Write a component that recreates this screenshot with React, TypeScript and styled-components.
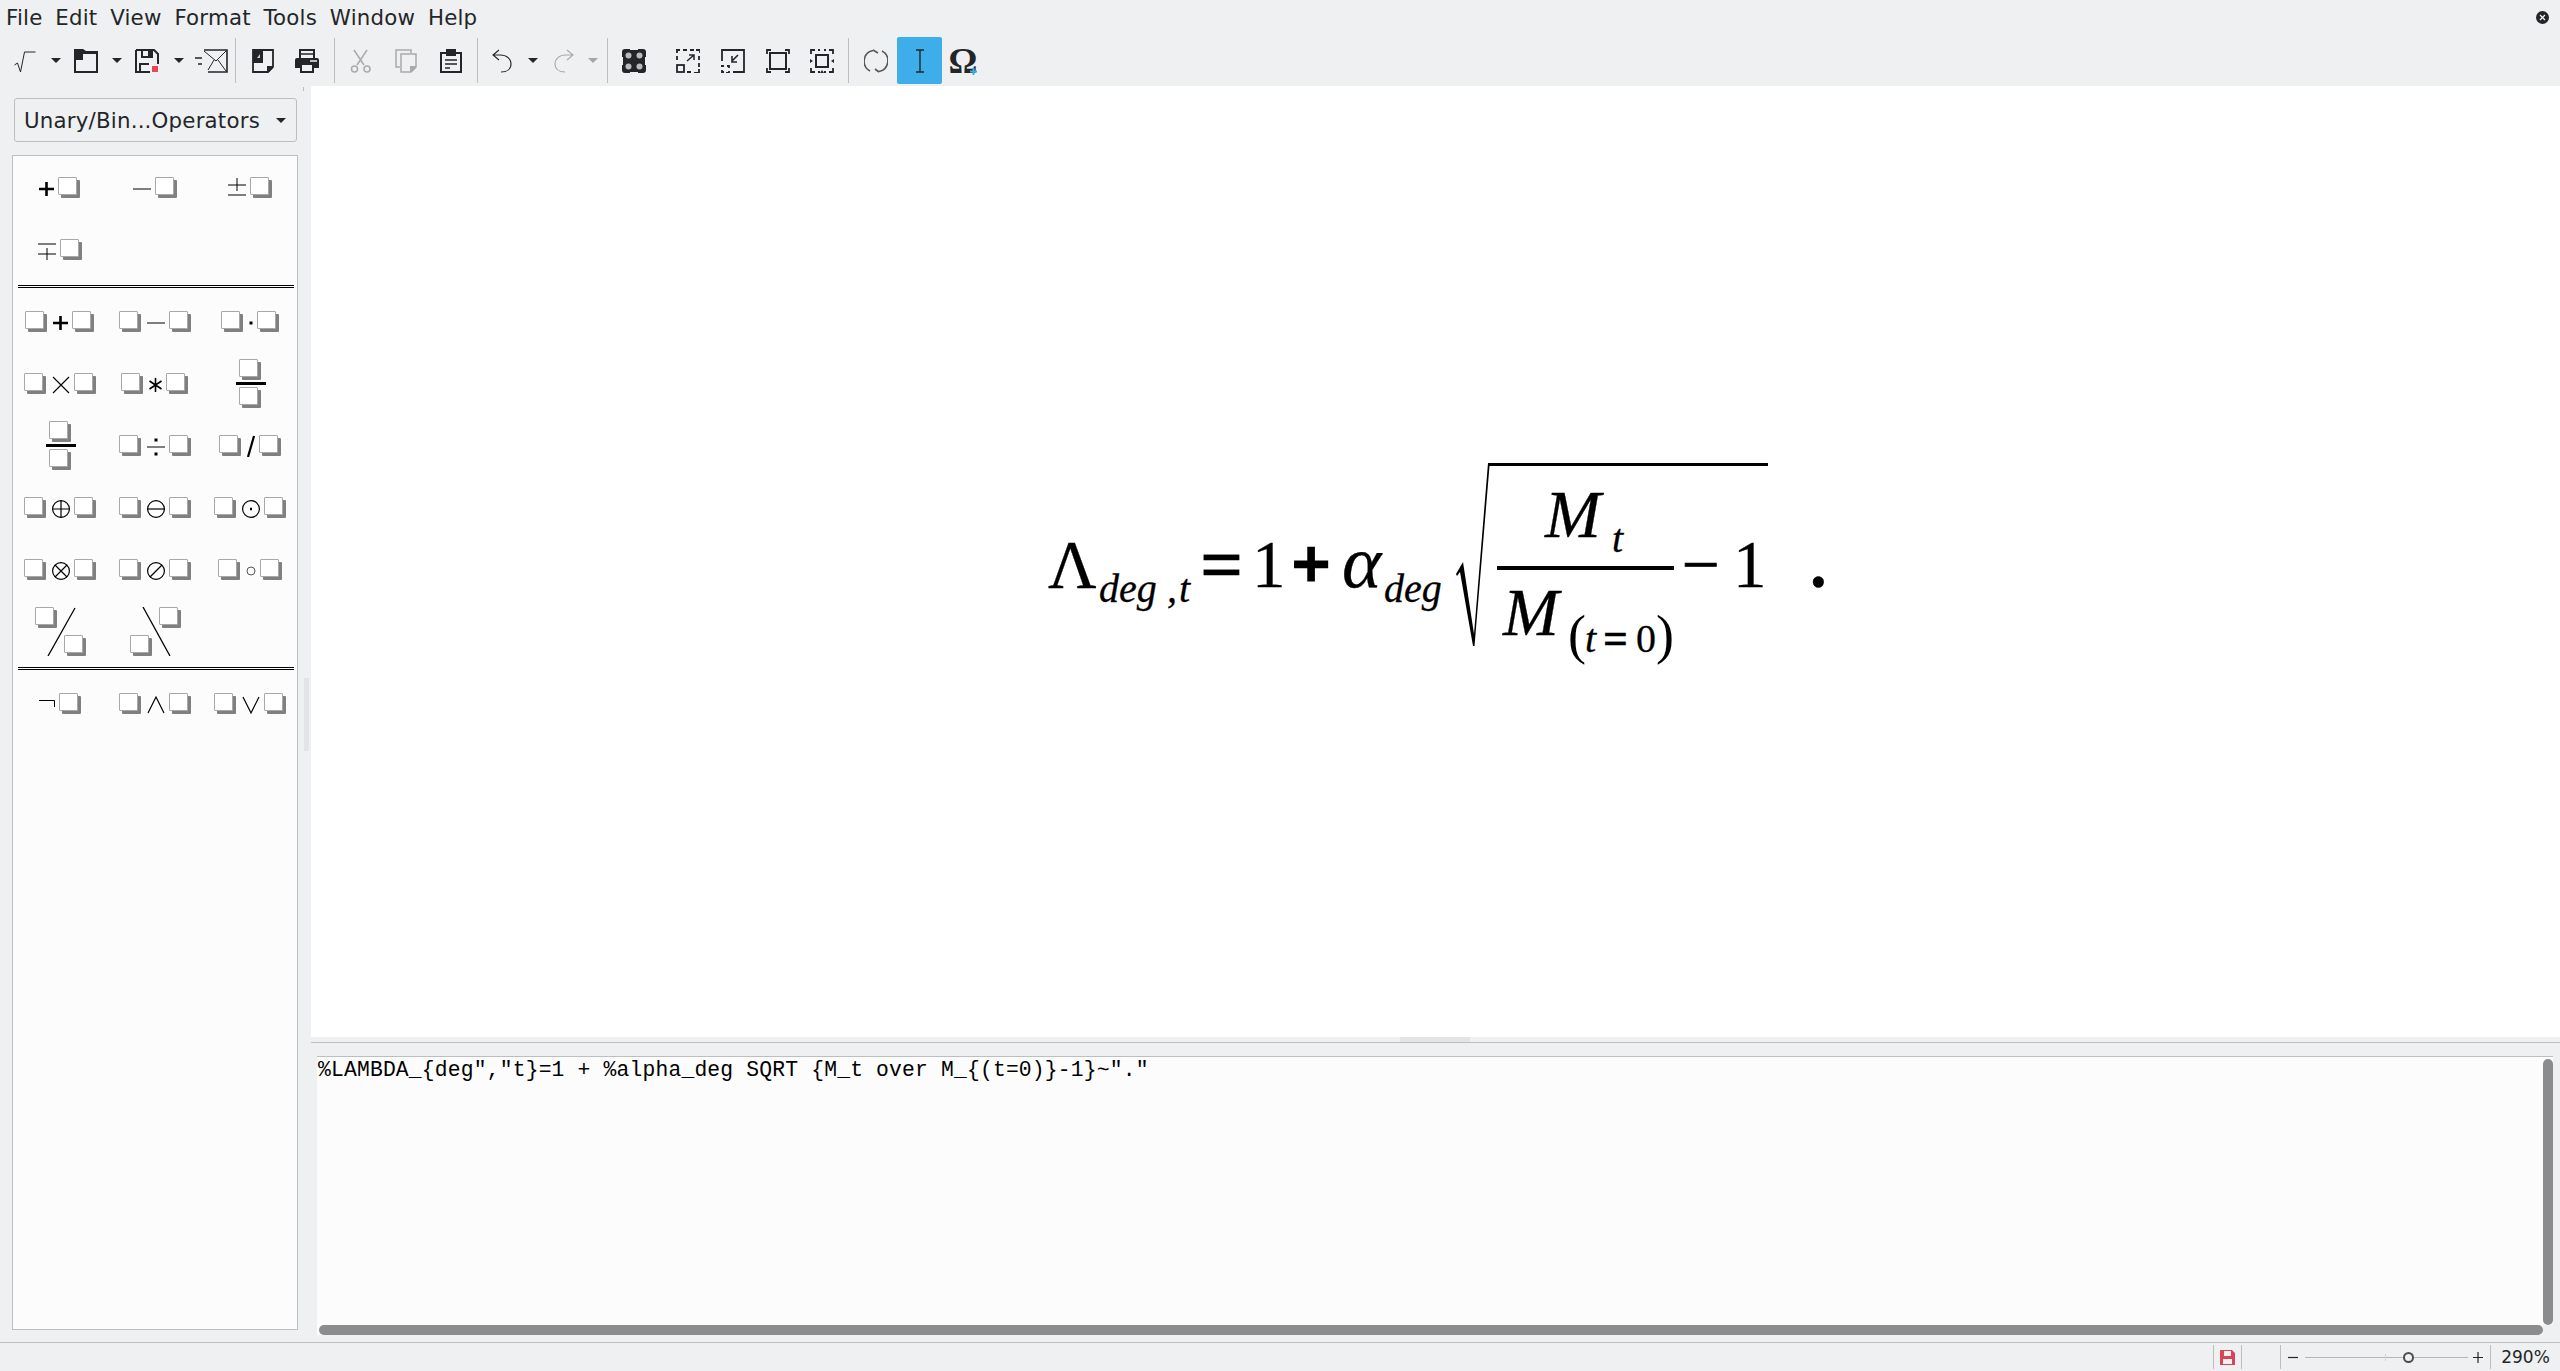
// Math formula editor window: menu, toolbar, elements panel, formula canvas, command pane
import React from 'react';
import styled, { createGlobalStyle } from 'styled-components';

const GlobalStyle = createGlobalStyle`
  html, body { margin: 0; padding: 0; height: 100%; overflow: hidden; }
  #root { height: 100%; }
`;

const Window = styled.div`
  width: 2560px;
  height: 1371px;
  display: flex;
  flex-direction: column;
  background: #eff0f1;
  color: #232629;
  font-family: "DejaVu Sans", sans-serif;
  font-size: 21.33px;
`;

const MenuBar = styled.div`
  height: 37px;
  flex: none;
  box-sizing: border-box;
  display: flex;
  align-items: center;
  padding: 0 11px 2px 0;
`;

const MenuItem = styled.div`
  padding: 0 6.4px;
  line-height: 26px;
  letter-spacing: 0.2px;

  &:first-child {
    padding-left: 6px;
  }
`;

const CloseDoc = styled.div`
  margin-left: auto;
  width: 13px;
  height: 13px;
  border-radius: 50%;
  background: #232629;
  display: flex;
  align-items: center;
  justify-content: center;
`;

const Toolbar = styled.div`
  height: 49px;
  flex: none;
  display: flex;
  align-items: flex-start;
  padding-left: 3px;
`;

const ToolSlot = styled.div<{ $w: number; $active?: boolean }>`
  width: ${p => p.$w}px;
  height: 47px;
  flex: none;
  display: flex;
  align-items: center;
  justify-content: center;
  border-radius: 2px;
  background: ${p => (p.$active ? '#3daee9' : 'transparent')};
`;

const ToolSep = styled.div`
  width: 1px;
  height: 45px;
  margin: 1px 5px 0;
  flex: none;
  background: #bcbebf;
`;

const OmegaGlyph = styled.span`
  font-family: "Liberation Serif", serif;
  font-weight: 700;
  font-size: 36px;
  line-height: 30px;
  color: #232629;
`;

const OmegaWrap = styled.div`
  position: relative;
  width: 26px;
  height: 30px;
  display: flex;
  align-items: center;
  justify-content: center;

  svg {
    position: absolute;
    right: -2px;
    bottom: 0;
  }
`;

const Main = styled.div`
  flex: 1;
  display: flex;
  min-height: 0;
`;

const Sidebar = styled.div`
  width: 311px;
  flex: none;
  position: relative;
  box-sizing: border-box;
  padding: 12px 13px 12px 12px;
  display: flex;
  flex-direction: column;

  &::before {
    content: '';
    position: absolute;
    right: 7px;
    top: 1px;
    width: 1px;
    height: 4px;
    background: #bcbebf;
  }
`;

const SideHandle = styled.div`
  position: absolute;
  right: 2px;
  top: 592px;
  width: 5px;
  height: 73px;
  background: #e3e4e5;
`;

const Dropdown = styled.div`
  height: 44px;
  margin: 0 1px 13px 2px;
  flex: none;
  box-sizing: border-box;
  border: 1px solid #bcbebf;
  border-radius: 3px;
  display: flex;
  align-items: center;
  justify-content: space-between;
  padding: 0 10px 0 9px;
  letter-spacing: 0.2px;
`;

const Caret = styled.div<{ $muted?: boolean }>`
  width: 0;
  height: 0;
  border-left: 5px solid transparent;
  border-right: 5px solid transparent;
  border-top: 5px solid ${p => (p.$muted ? '#a5a6a7' : '#232629')};
`;

const ElementBox = styled.div`
  flex: 1;
  box-sizing: border-box;
  border: 1px solid #bcbebf;
  background: #fcfcfc;
`;

const ElementGrid = styled.div`
  display: grid;
  grid-template-columns: repeat(3, 95px);
  grid-auto-rows: 62px;
`;

const ElementCell = styled.div`
  display: flex;
  align-items: center;
  justify-content: center;
  gap: 4px;
`;

const Placeholder = styled.div`
  width: 17px;
  height: 16px;
  flex: none;
  margin: 0 5px 3px 0;
  border: 1px solid #a8a8a8;
  border-radius: 1px;
  background: #fff;
  box-shadow: 3px 3px 0 #808080;
`;

const FracCell = styled.div`
  display: flex;
  flex-direction: column;
  align-items: center;
  gap: 2px;
`;

const FracPlaceholder = styled(Placeholder)`
  margin: 0 0 3px 0;
  position: relative;
  left: -2px;
`;

const FracBar = styled.div`
  width: 30px;
  height: 3px;
  background: #000;
`;

const WideGrid = styled.div`
  position: relative;
  display: grid;
  grid-template-columns: 22px 22px;
  grid-template-rows: 21px 21px;
  gap: 7px;

  svg {
    position: absolute;
    left: 0;
    top: 0;
  }
`;

const GroupRule = styled.div<{ $top: number; $bottom: number }>`
  padding: ${p => p.$top}px 3px ${p => p.$bottom}px 5px;
`;

const RuleLine = styled.div`
  height: 1px;
  border-top: 1px solid #000;
  border-bottom: 1px solid #000;
  background: #fff;
`;

const WorkColumn = styled.div`
  flex: 1;
  min-width: 0;
  display: flex;
  flex-direction: column;
`;

const Canvas = styled.div`
  height: 951px;
  flex: none;
  background: #fff;
  display: flex;
  align-items: center;
  justify-content: center;
`;

const Splitter = styled.div`
  height: 19px;
  flex: none;
  box-sizing: border-box;
  padding-top: 5px;
  position: relative;
`;

const SplitLine = styled.div`
  height: 1px;
  background: #bcbebf;
`;

const SplitGrip = styled.div`
  position: absolute;
  left: 1089px;
  top: 0;
  width: 70px;
  height: 5px;
  background: #e3e4e5;
`;

const EditorPane = styled.div`
  flex: 1;
  margin: 0 7px 7px 6px;
  display: grid;
  grid-template-columns: 1fr 10px;
  grid-template-rows: 1fr 10px;
  min-height: 0;
`;

const EditorText = styled.div`
  background: #fcfcfc;
  border-top: 1px solid #bcbebf;
  padding: 1px 1px 0;
  font-family: "Liberation Mono", monospace;
  font-size: 21.33px;
  letter-spacing: 0.18px;
  line-height: 24px;
  white-space: pre;
  color: #000;
`;

const VTrack = styled.div`
  background: #fcfcfc;
  border-top: 1px solid #bcbebf;
  padding: 2px 0 0;
`;

const VThumb = styled.div`
  height: 100%;
  box-sizing: border-box;
  background: #8b8c8d;
  border-radius: 5px;
`;

const HTrack = styled.div`
  background: #fcfcfc;
  padding-left: 2px;
`;

const HThumb = styled.div`
  height: 100%;
  background: #8b8c8d;
  border-radius: 5px;
`;

const StatusBar = styled.div`
  height: 29px;
  flex: none;
  box-sizing: border-box;
  border-top: 1px solid #bcbebf;
  display: flex;
  align-items: center;
  justify-content: flex-end;
`;

const StatusCell = styled.div<{ $w: number }>`
  width: ${p => p.$w}px;
  height: 24px;
  box-sizing: border-box;
  border-left: 1px solid #bcbebf;
  display: flex;
  align-items: center;
  justify-content: center;
  flex: none;
`;

const ZoomSlider = styled.div`
  width: 163px;
  height: 1px;
  background: #b4b5b6;
  position: relative;
  margin: 0 5px 0 7px;
`;

const ZoomTick = styled.div`
  position: absolute;
  left: 80px;
  top: -3px;
  width: 1px;
  height: 7px;
  background: #d4d5d6;
`;

const ZoomThumb = styled.div`
  position: absolute;
  left: 98px;
  top: -5px;
  width: 11px;
  height: 11px;
  box-sizing: border-box;
  border: 2px solid #4d4d4d;
  border-radius: 50%;
  background: #eff0f1;
`;

const ZoomSign = styled.div`
  width: 10px;
  height: 11px;
  flex: none;

  svg {
    display: block;
  }
`;

const ZoomValue = styled.div`
  font-size: 17px;
  line-height: 22px;
`;

const INK = '#232629';
const GREY = '#a9aaab';

type IconProps = { w?: number; h?: number; children: React.ReactNode };

const Ic = ({ w = 24, h = 24, children }: IconProps) => (
  <svg width={w} height={h} viewBox={`0 0 ${w} ${h}`} fill="none">
    {children}
  </svg>
);

const RootIcon = () => (
  <Ic w={22} h={24}>
    <path d="M0.5 16 L3.5 14 L6.5 23 L10.5 3 H21.5" stroke={INK} strokeWidth="1" />
  </Ic>
);

const FolderIcon = () => (
  <Ic>
    <path fillRule="evenodd" fill={INK} d="M0 0H9L12 2H24V24H0ZM9 5V11H2V22H22V5Z" />
  </Ic>
);

const SaveIcon = () => (
  <Ic>
    <path d="M1 1H19L23 5V15M15 23H1V1" stroke={INK} strokeWidth="2" />
    <path d="M7 1V8H17V1" stroke={INK} strokeWidth="2" />
    <path fill={INK} d="M13 2H16V7H13Z" />
    <path d="M5 23V15H14" stroke={INK} strokeWidth="2" />
    <rect x="17" y="17" width="6" height="6" fill="#e8475a" />
  </Ic>
);

const MailIcon = () => (
  <Ic w={34}>
    <path d="M10 1H33V23H14" stroke={INK} strokeWidth="1.6" />
    <path d="M10 2L22 12L32 2M14 21L20 11M32 22L24 11" stroke={INK} strokeWidth="1" />
    <path d="M1 9H8M4 15H8" stroke={INK} strokeWidth="1.6" />
  </Ic>
);

const ImportIcon = () => (
  <Ic w={22}>
    <path d="M1 1H21V18L16 23H1Z" stroke={INK} strokeWidth="1.8" />
    <path fill={INK} d="M1 1H11V14H1Z M21 17V19L17 23H15V17Z" />
    <path fill="#c9cacb" d="M5 9L8 5V9Z" />
  </Ic>
);

const PrintIcon = () => (
  <Ic>
    <path d="M5 9V1H19V9" stroke={INK} strokeWidth="2" />
    <path fill={INK} d="M2 9H22Q24 9 24 11V19H19V16H5V19H0V11Q0 9 2 9Z" />
    <path d="M6 5H18" stroke={INK} strokeWidth="1.5" />
    <path d="M15 12H22" stroke="#eff0f1" strokeWidth="1.5" />
    <path d="M6 16V23H18V16" stroke={INK} strokeWidth="2" />
  </Ic>
);

const CutIcon = () => (
  <Ic w={22}>
    <path d="M4 1L14 16M17 1L7 16" stroke={GREY} strokeWidth="1.5" />
    <circle cx="4.5" cy="20" r="3" stroke={GREY} strokeWidth="1.5" />
    <circle cx="17" cy="20" r="3" stroke={GREY} strokeWidth="1.5" />
  </Ic>
);

const CopyIcon = () => (
  <Ic w={22}>
    <path d="M5 18H1V1H16V4" stroke={GREY} strokeWidth="1.5" />
    <path d="M6 5H21V18L16 23H6Z" stroke={GREY} strokeWidth="1.5" />
    <path fill={GREY} d="M21 17V19L17 23H15V17Z" />
  </Ic>
);

const PasteIcon = () => (
  <Ic w={22}>
    <path d="M6 4H1V23H21V4H16" stroke={INK} strokeWidth="2" />
    <path fill={INK} d="M6 0H16V7H6Z" />
    <path d="M5 11H17M5 15H17M5 19H10" stroke={INK} strokeWidth="1.6" />
  </Ic>
);

const UndoIcon = ({ color = INK, flip = false }: { color?: string; flip?: boolean }) => (
  <svg width="20" height="24" viewBox="0 0 20 24" fill="none" style={flip ? { transform: 'scaleX(-1)' } : undefined}>
    <path d="M7 1L1 6L7 11M1 6H8C15 6 19 10 19 15C19 20 15 23 9 23" stroke={color} strokeWidth="1.1" />
  </svg>
);

const ZoomGridIcon = () => (
  <Ic>
    <rect width="24" height="24" rx="3" fill={INK} />
    <circle cx="6.5" cy="6.5" r="3" fill="#b9babb" />
    <circle cx="17.5" cy="6.5" r="3" fill="#b9babb" />
    <circle cx="6.5" cy="17.5" r="3" fill="#b9babb" />
    <circle cx="17.5" cy="17.5" r="3" fill="#b9babb" />
    <path d="M8 0.5H16M8 23.5H16M0.5 8V16M23.5 8V16" stroke="#eff0f1" strokeWidth="1" />
  </Ic>
);

const ZoomInIcon = () => (
  <Ic>
    <path d="M0 1H4M7 1H11M14 1H18M20 1H24V4M23 7V11M23 14V18M23 20V24H18M15 23H11M1 0V4M1 7V11" stroke={INK} strokeWidth="1.8" />
    <rect x="1" y="16" width="7" height="7" stroke={INK} strokeWidth="1.8" />
    <path d="M11 12L18 6M13 6H18V11" stroke={INK} strokeWidth="1.5" />
  </Ic>
);

const ZoomOutIcon = () => (
  <Ic>
    <path d="M1 12V1H23V23H12" stroke={INK} strokeWidth="1.8" />
    <path d="M0 17H3M6 17H8V19M8 22V24H5M3 23H1V21" stroke={INK} strokeWidth="1.8" />
    <path d="M17 6L11 12M11 7V13H16" stroke={INK} strokeWidth="1.6" />
  </Ic>
);

const ZoomAllIcon = () => (
  <Ic>
    <path d="M1 5V1H5M19 1H23V5M1 19V23H5M19 23H23V19" stroke={INK} strokeWidth="1.8" />
    <rect x="4" y="4" width="16" height="16" stroke={INK} strokeWidth="2" />
  </Ic>
);

const ZoomFitIcon = () => (
  <Ic>
    <path d="M1 5V1H5M8 1H10M14 1H16M19 1H23V5M1 19V23H5M8 23H10M14 23H16M19 23H23V19" stroke={INK} strokeWidth="1.8" />
    <rect x="6" y="6" width="12" height="12" stroke={INK} strokeWidth="2" />
    <path fill={INK} d="M0 10L3 12L0 14ZM24 10L21 12L24 14ZM10 24L12 21L14 24Z" />
  </Ic>
);

const RefreshIcon = () => (
  <Ic>
    <path d="M9 1.5A11 11 0 0 0 6 22M15 22.5A11 11 0 0 0 18 2" stroke="#55585a" strokeWidth="1.6" />
    <path d="M9 1L14 4M15 23L11 20" stroke="#55585a" strokeWidth="1.6" />
  </Ic>
);

const CursorIcon = () => (
  <Ic w={10}>
    <path d="M1 1H9M5 1V23M1 23H9" stroke={INK} strokeWidth="1.4" />
  </Ic>
);

const OmegaPlus = () => (
  <Ic w={9} h={9}>
    <path d="M4.5 1V8M1 4.5H8" stroke="#3daee9" strokeWidth="2" />
  </Ic>
);

const CloseGlyph = () => (
  <Ic w={7} h={7}>
    <path d="M1 1L6 6M6 1L1 6" stroke="#eff0f1" strokeWidth="1.3" />
  </Ic>
);

const StatusSave = () => (
  <Ic w={15} h={15}>
    <path fillRule="evenodd" fill="#da4453" d="M0 0H12L15 3V15H0ZM4 1V6H11V1ZM3 9V14H12V9Z" />
  </Ic>
);

// the operators in the panel are little rendered formulas, drawn at y=12 of the viewBox
const OPS: Record<string, { w: number; d?: string; sw?: number }> = {
  plus: { w: 15, d: 'M0 12H15M7.5 5V19', sw: 2.6 },
  minus: { w: 18, d: 'M0 12H18', sw: 1 },
  pm: { w: 18, d: 'M0 8H18M9 1V14M0 18H18', sw: 1 },
  mp: { w: 18, d: 'M0 5H18M0 15H18M9 9V21', sw: 1 },
  times: { w: 18, d: 'M1 4L17 20M17 4L1 20', sw: 1.1 },
  ast: { w: 13, d: 'M6.5 5V19M0.5 8L12.5 16M12.5 8L0.5 16', sw: 1.6 },
  cdot: { w: 4, d: 'M0.5 12H3.5', sw: 3 },
  div: { w: 18, d: 'M0 12H18', sw: 1 },
  slash: { w: 8, d: 'M7 1L1 22', sw: 2.2 },
  neg: { w: 16, d: 'M0 7.5H15.5V14', sw: 1 },
  wedge: { w: 18, d: 'M1 20L9 4L17 20', sw: 1.2 },
  vee: { w: 18, d: 'M1 4L9 20L17 4', sw: 1.2 },
  oplus: { w: 18, d: 'M9 3.5V20.5M0.5 12H17.5', sw: 1.2 },
  ominus: { w: 18, d: 'M0.5 12H17.5', sw: 1.2 },
  otimes: { w: 18, d: 'M3 6L15 18M15 6L3 18', sw: 1.2 },
  oslash: { w: 18, d: 'M3 18L15 6', sw: 1.2 },
  odot: { w: 18, d: 'M8 12H10', sw: 2.4 },
};

const RINGED = ['oplus', 'ominus', 'otimes', 'oslash', 'odot'];

const Op = ({ kind }: { kind: string }) => {
  if (kind === 'circ') {
    return (
      <svg width="10" height="24" viewBox="0 -2 10 24" fill="none">
        <circle cx="5" cy="12" r="4" stroke="#555" strokeWidth="1" />
      </svg>
    );
  }
  const op = OPS[kind];
  return (
    <svg width={op.w} height="24" viewBox={`0 -2 ${op.w} 24`} fill="none">
      {RINGED.includes(kind) && <circle cx="9" cy="12" r="8.4" stroke="#000" strokeWidth="1.2" />}
      {kind === 'div' && <path d="M7.5 5H10.5M7.5 19H10.5" stroke="#000" strokeWidth="3" />}
      <path d={op.d} stroke="#000" strokeWidth={op.sw} />
    </svg>
  );
};

const Unary = ({ op }: { op: string }) => (
  <ElementCell>
    <Op kind={op} />
    <Placeholder />
  </ElementCell>
);

const Binary = ({ op }: { op: string }) => (
  <ElementCell>
    <Placeholder />
    <Op kind={op} />
    <Placeholder />
  </ElementCell>
);

const Frac = () => (
  <ElementCell>
    <FracCell>
      <FracPlaceholder />
      <FracBar />
      <FracPlaceholder />
    </FracCell>
  </ElementCell>
);

const WidePlaceholder = styled(Placeholder)`
  margin: 0;
`;

const Wide = ({ back }: { back?: boolean }) => (
  <ElementCell>
    <WideGrid>
      {back ? <span /> : <WidePlaceholder />}
      {back ? <WidePlaceholder /> : <span />}
      {back ? <WidePlaceholder /> : <span />}
      {back ? <span /> : <WidePlaceholder />}
      <svg width="51" height="49" viewBox="0 0 51 49" fill="none">
        <path d={back ? 'M13 0L40 49' : 'M13 49L40 1'} stroke="#000" strokeWidth="1.3" />
      </svg>
    </WideGrid>
  </ElementCell>
);

const Empty = styled.div``;

const FText = styled.text<{ $size: number; $italic?: boolean; $bold?: boolean; $heavy?: number }>`
  font-family: "Liberation Serif", serif;
  font-size: ${p => p.$size}px;
  font-style: ${p => (p.$italic ? 'italic' : 'normal')};
  font-weight: ${p => (p.$bold ? 700 : 400)};
  fill: #000;
  stroke: #000;
  stroke-width: ${p => p.$heavy ?? 0.3}px;
`;

// viewBox uses page coordinates so the glyph positions read straight off the reference
const Formula = () => (
  <svg width="785" height="251" viewBox="1043 436 785 251">
    <FText x="1048" y="587" $size={67}>Λ</FText>
    <FText x="1099" y="602" $size={40} $italic>deg</FText>
    <FText x="1167" y="602" $size={40} $italic>,</FText>
    <FText x="1179" y="602" $size={40} $italic>t</FText>
    <FText x="1200" y="590" $size={76} $bold $heavy={0.3}>=</FText>
    <FText x="1252" y="587" $size={67}>1</FText>
    <FText x="1292" y="587" $size={67} $bold $heavy={3}>+</FText>
    <FText x="1342" y="587" $size={75} $italic>α</FText>
    <FText x="1384" y="602" $size={40} $italic>deg</FText>
    <path fill="#000" d="M1456 574L1463 562L1474 634L1488 463H1768V466H1489.5L1474.5 646H1473L1460 572L1457 576Z" />
    <FText x="1545" y="537" $size={67} $italic>M</FText>
    <FText x="1612" y="552" $size={40} $italic>t</FText>
    <rect x="1497" y="566" width="177" height="4" fill="#000" />
    <FText x="1503" y="635" $size={67} $italic>M</FText>
    <FText x="1568" y="653" $size={54} $heavy={0}>(</FText>
    <FText x="1585" y="652" $size={40} $italic>t</FText>
    <FText x="1603" y="653" $size={44} $bold>=</FText>
    <FText x="1636" y="652" $size={40}>0</FText>
    <FText x="1656" y="653" $size={54} $heavy={0}>)</FText>
    <FText x="1682" y="587" $size={67} $heavy={0.8}>−</FText>
    <FText x="1733" y="587" $size={67}>1</FText>
    <FText x="1810" y="587" $size={67} $bold>.</FText>
  </svg>
);

const MENUS = ['File', 'Edit', 'View', 'Format', 'Tools', 'Window', 'Help'];

const App: React.FC = () => (
  <Window>
    <GlobalStyle />
    <MenuBar>
      {MENUS.map(m => (
        <MenuItem key={m}>{m}</MenuItem>
      ))}
      <CloseDoc>
        <CloseGlyph />
      </CloseDoc>
    </MenuBar>

    <Toolbar>
      <ToolSlot $w={44}><RootIcon /></ToolSlot>
      <ToolSlot $w={18}><Caret /></ToolSlot>
      <ToolSlot $w={42}><FolderIcon /></ToolSlot>
      <ToolSlot $w={20}><Caret /></ToolSlot>
      <ToolSlot $w={40}><SaveIcon /></ToolSlot>
      <ToolSlot $w={24}><Caret /></ToolSlot>
      <ToolSlot $w={39}><MailIcon /></ToolSlot>
      <ToolSep />
      <ToolSlot $w={44}><ImportIcon /></ToolSlot>
      <ToolSlot $w={44}><PrintIcon /></ToolSlot>
      <ToolSep />
      <ToolSlot $w={42}><CutIcon /></ToolSlot>
      <ToolSlot $w={48}><CopyIcon /></ToolSlot>
      <ToolSlot $w={42}><PasteIcon /></ToolSlot>
      <ToolSep />
      <ToolSlot $w={38}><UndoIcon /></ToolSlot>
      <ToolSlot $w={24}><Caret /></ToolSlot>
      <ToolSlot $w={38}><UndoIcon color={GREY} flip /></ToolSlot>
      <ToolSlot $w={19}><Caret $muted /></ToolSlot>
      <ToolSep />
      <ToolSlot $w={42}><ZoomGridIcon /></ToolSlot>
      <ToolSlot $w={10} />
      <ToolSlot $w={45}><ZoomInIcon /></ToolSlot>
      <ToolSlot $w={45}><ZoomOutIcon /></ToolSlot>
      <ToolSlot $w={45}><ZoomAllIcon /></ToolSlot>
      <ToolSlot $w={43}><ZoomFitIcon /></ToolSlot>
      <ToolSep />
      <ToolSlot $w={43}><RefreshIcon /></ToolSlot>
      <ToolSlot $w={45} $active><CursorIcon /></ToolSlot>
      <ToolSlot $w={42}>
        <OmegaWrap>
          <OmegaGlyph>Ω</OmegaGlyph>
          <OmegaPlus />
        </OmegaWrap>
      </ToolSlot>
    </Toolbar>

    <Main>
      <Sidebar>
        <Dropdown>
          <span>Unary/Bin...Operators</span>
          <Caret />
        </Dropdown>
        <ElementBox>
          <ElementGrid>
            <Unary op="plus" />
            <Unary op="minus" />
            <Unary op="pm" />
            <Unary op="mp" />
          </ElementGrid>
          <GroupRule $top={5} $bottom={2}><RuleLine /></GroupRule>
          <ElementGrid>
            <Binary op="plus" />
            <Binary op="minus" />
            <Binary op="cdot" />
            <Binary op="times" />
            <Binary op="ast" />
            <Frac />
            <Frac />
            <Binary op="div" />
            <Binary op="slash" />
            <Binary op="oplus" />
            <Binary op="ominus" />
            <Binary op="odot" />
            <Binary op="otimes" />
            <Binary op="oslash" />
            <Binary op="circ" />
            <Wide />
            <Wide back />
            <Empty />
          </ElementGrid>
          <GroupRule $top={5} $bottom={2}><RuleLine /></GroupRule>
          <ElementGrid>
            <Unary op="neg" />
            <Binary op="wedge" />
            <Binary op="vee" />
          </ElementGrid>
        </ElementBox>
        <SideHandle />
      </Sidebar>

      <WorkColumn>
        <Canvas>
          <Formula />
        </Canvas>
        <Splitter>
          <SplitGrip />
          <SplitLine />
        </Splitter>
        <EditorPane>
          <EditorText>{'%LAMBDA_{deg","t}=1 + %alpha_deg SQRT {M_t over M_{(t=0)}-1}~"."'}</EditorText>
          <VTrack><VThumb /></VTrack>
          <HTrack><HThumb /></HTrack>
          <span />
        </EditorPane>
      </WorkColumn>
    </Main>

    <StatusBar>
      <StatusCell $w={28}><StatusSave /></StatusCell>
      <StatusCell $w={39} />
      <StatusCell $w={210}>
        <ZoomSign>
          <svg width="10" height="11" viewBox="0 0 10 11"><path d="M0 5.5H10" stroke={INK} strokeWidth="1.2" /></svg>
        </ZoomSign>
        <ZoomSlider>
          <ZoomTick />
          <ZoomThumb />
        </ZoomSlider>
        <ZoomSign>
          <svg width="10" height="11" viewBox="0 0 10 11"><path d="M0 5.5H10M5 0V11" stroke={INK} strokeWidth="1.2" /></svg>
        </ZoomSign>
      </StatusCell>
      <StatusCell $w={70}><ZoomValue>290%</ZoomValue></StatusCell>
    </StatusBar>
  </Window>
);

export default App;
